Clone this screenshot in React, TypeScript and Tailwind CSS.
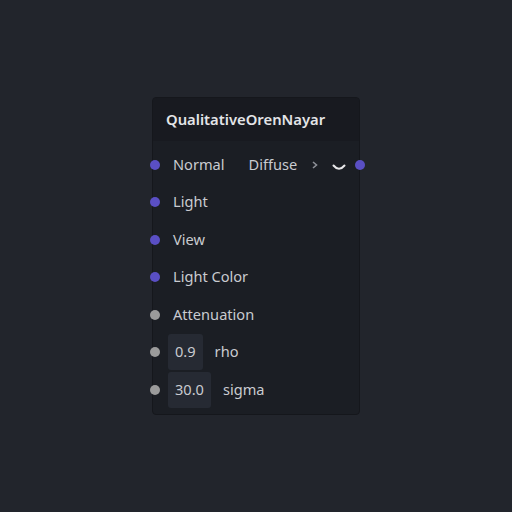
import React from "react";

const font = { fontFamily: '"Noto Sans", "Open Sans", sans-serif' };

function Pin({ purple }: { purple?: boolean }) {
  return (
    <span
      className={`absolute left-[-3px] top-1/2 -translate-y-1/2 w-[10px] h-[10px] rounded-full ${
        purple ? "bg-[#5a4fc4]" : "bg-[#9b9b9b]"
      }`}
    />
  );
}

function Row({ children, purple }: { children: React.ReactNode; purple?: boolean }) {
  return (
    <div className="relative h-[37.5px] flex items-center pl-[20px] text-[14.6px] text-[#c9cbd0]">
      <Pin purple={purple} />
      {children}
    </div>
  );
}

export default function App() {
  return (
    <div className="w-[512px] h-[512px] bg-[#22252c] relative overflow-hidden" style={font}>
      <div className="absolute left-[152px] top-[97px] w-[208px] h-[318px] rounded-[4px] bg-[#1b1e24] border border-[#15171c] flex flex-col">
        <div className="h-[43px] flex items-center pl-[13px] bg-[#181a20] rounded-t-[4px] text-[14.8px] font-semibold text-[#e3e4e7]">
          QualitativeOrenNayar
        </div>
        <div className="flex flex-col pt-[5px]">
          <Row purple>
            <span>Normal</span>
            <span className="ml-[24px]">Diffuse</span>
            <span className="ml-[14px] text-[#8d9097]">
              <svg width="8" height="10" viewBox="0 0 8 10">
                <path d="M2 2 L5.5 5 L2 8" stroke="#8d9097" strokeWidth="1.6" fill="none" />
              </svg>
            </span>
            <span className="ml-[13px] mt-[6px]">
              <svg width="14" height="8" viewBox="0 0 14 8">
                <path d="M1.5 1.5 Q7 8 12.5 1.5" stroke="#e8e8ea" strokeWidth="2" fill="none" strokeLinecap="round" />
              </svg>
            </span>
            <span className="absolute right-[-6px] top-1/2 -translate-y-1/2 w-[10px] h-[10px] rounded-full bg-[#5a4fc4]" />
          </Row>
          <Row purple>Light</Row>
          <Row purple>View</Row>
          <Row purple>Light Color</Row>
          <Row>Attenuation</Row>
          <Row>
            <div className="ml-[-5px] h-[36px] px-[7px] flex items-center rounded-[3px] bg-[#262a33]">0.9</div>
            <span className="ml-[12px]">rho</span>
          </Row>
          <Row>
            <div className="ml-[-5px] h-[36px] px-[7px] flex items-center rounded-[3px] bg-[#262a33]">30.0</div>
            <span className="ml-[12px]">sigma</span>
          </Row>
        </div>
      </div>
    </div>
  );
}
